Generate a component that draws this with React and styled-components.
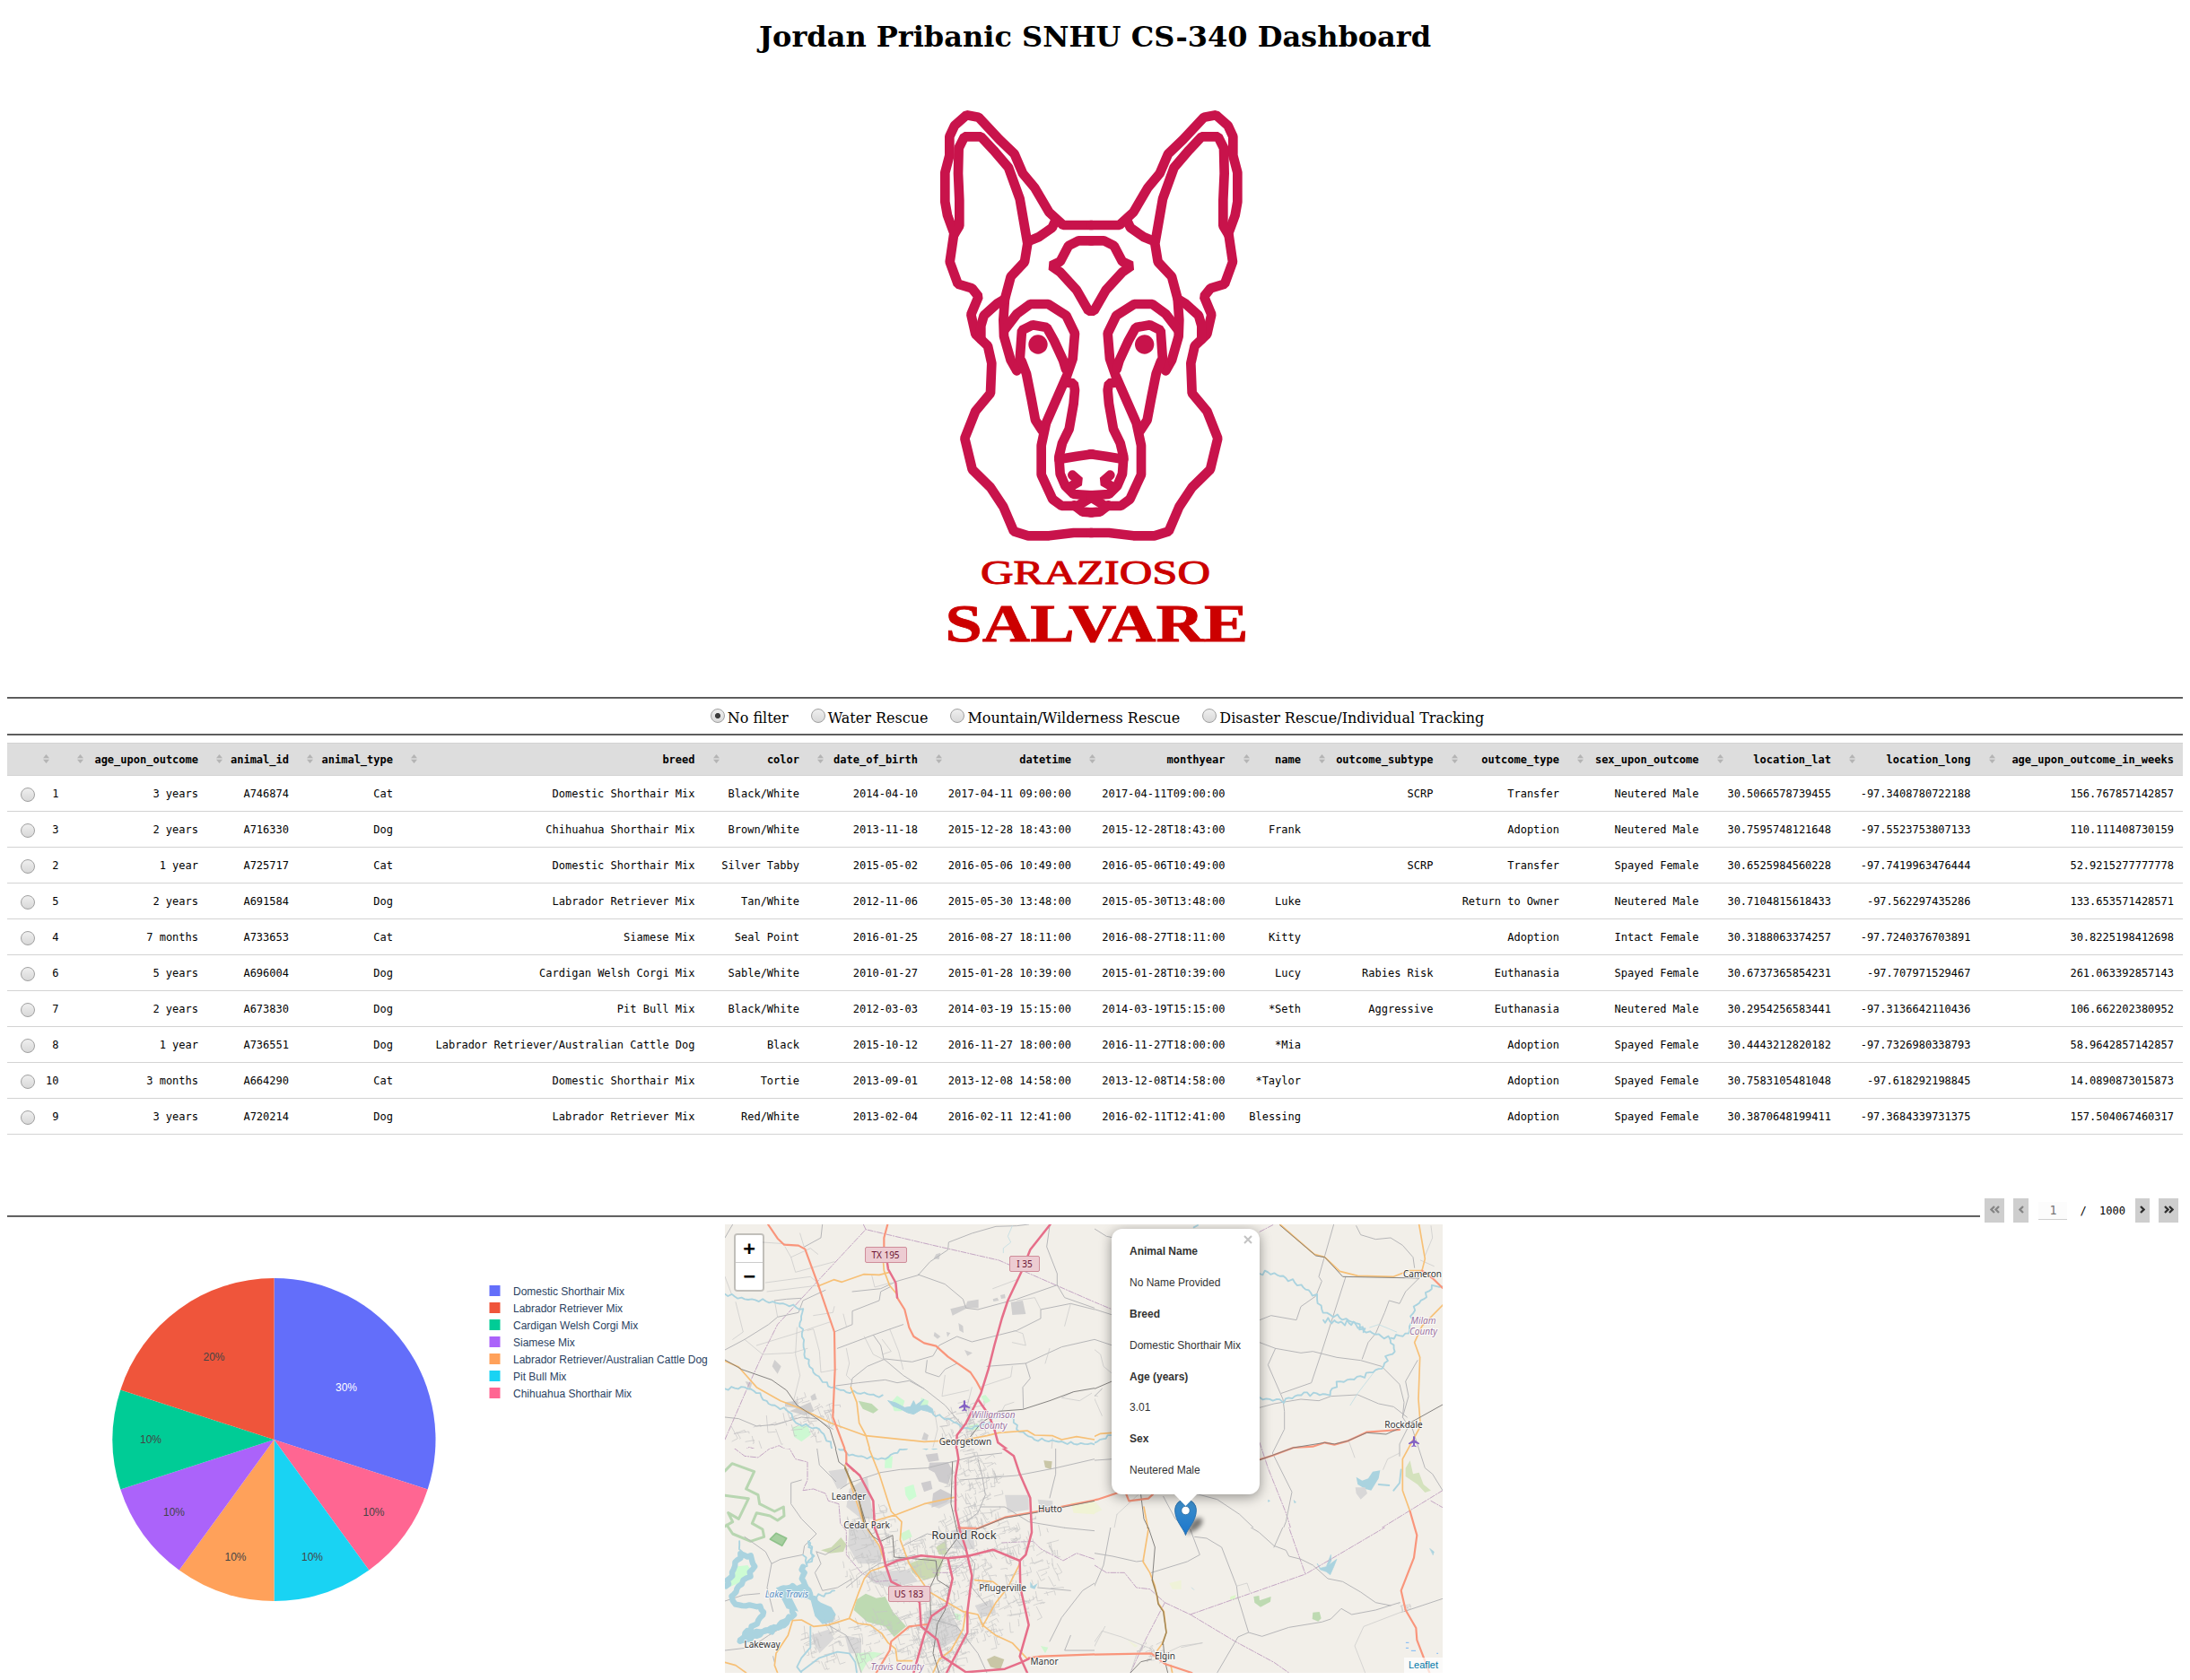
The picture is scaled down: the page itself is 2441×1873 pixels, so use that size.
import React from 'react';
import styled, { createGlobalStyle } from 'styled-components';

const GlobalStyle = createGlobalStyle`
  body { margin: 0; background: #fff; }
  * { box-sizing: border-box; }
`;

const Page = styled.main`
  width: 2441px;
  padding: 0 8px;
  color: #000;
  font-family: 'DejaVu Serif', serif;
  font-size: 16px;
`;

const Title = styled.h1`
  margin: 0;
  height: 90px;
  padding-top: 23px;
  text-align: center;
  font-size: 32px;
  line-height: 37px;
  font-weight: bold;
`;

const Logo = styled.svg`
  display: block;
  width: 441px;
  height: 650px;
  margin: 0 auto 37px;
`;

const Rule = styled.hr`
  margin: 0;
  height: 2px;
  border: 0;
  border-top: 1px solid #555;
  border-bottom: 1px solid #6a6a6a;
`;

const PagerRule = styled(Rule)`
  flex: 1;
  margin: 19px 5px 0 0;
`;

const Filters = styled.div`
  height: 39px;
  display: flex;
  justify-content: center;
  gap: 25px;
  padding: 11px 0 0 5px;
`;

const Option = styled.label`
  display: flex;
  gap: 3px;
  line-height: 21px;
  white-space: nowrap;
`;

const Radio = styled.span`
  flex: none;
  width: 16px;
  height: 16px;
  border: 1px solid #a0a0a0;
  border-radius: 50%;
  background: ${(p) =>
    p.$on
      ? 'radial-gradient(circle, #3c3c3c 0 2.7px, transparent 3.4px), linear-gradient(#efefef, #d8d8d8)'
      : 'linear-gradient(#efefef, #d8d8d8)'};
`;

const Table = styled.table`
  width: 2425px;
  margin-top: 8px;
  table-layout: fixed;
  border-collapse: separate;
  border-spacing: 0;
  font-family: 'DejaVu Sans Mono', monospace;
  font-size: 12px;
`;

const Head = styled.th`
  height: 37px;
  padding: 1px 10px 0;
  border: solid #d3d3d3;
  border-width: 1px 0;
  background: #ddd;
  font-weight: bold;
  white-space: nowrap;
`;

const HeadInner = styled.div`
  display: flex;
  align-items: center;
  justify-content: space-between;
`;

const SortMark = styled.svg`
  display: block;
  width: 7px;
  height: 10px;
  margin: -3px 0 0 0;
  fill: #b4b4b4;
`;

const Cell = styled.td`
  height: 40px;
  padding: ${(p) => (p.$pick ? '2px 0 0 15px' : '0 10px')};
  border-bottom: 1px solid #d3d3d3;
  text-align: right;
  white-space: nowrap;
`;

const Pick = styled(Radio)`
  display: block;
`;

const Pager = styled.div`
  display: flex;
  height: 27px;
  margin: 71px 5px 2px 0;
  font-family: 'DejaVu Sans Mono', monospace;
  font-size: 12px;
  line-height: 28px;
`;

const PageButton = styled.button`
  width: ${(p) => p.$w}px;
  margin: 0 ${(p) => p.$after || 0}px 0 0;
  padding: 0;
  border: 0;
  height: 27px;
  background: #cecece;
  color: ${(p) => (p.disabled ? '#858585' : '#2f2f2f')};
  display: flex;
  align-items: center;
  justify-content: center;
`;

const Chevron = styled.svg`
  height: 9px;
  margin-top: -2px;
  fill: none;
  stroke: currentColor;
  stroke-width: 2.3;
`;

const PageNumber = styled.span`
  width: 32px;
  height: 20px;
  margin: 4px 14px 0 11px;
  border-bottom: 1px solid #cfcfcf;
  background: #fcfcfc;
  color: #777;
  font-size: 13.3px;
  line-height: 19px;
  text-align: center;
`;

const PageTotal = styled.span`
  margin-right: 11px;
  white-space: pre;
`;

const Panels = styled.section`
  display: flex;
  height: 508px;
  padding-bottom: 8px;
`;

const Chart = styled.svg`
  display: block;
  width: 800px;
  height: 500px;
  font-family: 'Liberation Sans', Arial, sans-serif;
  font-size: 12px;
`;

const MapPane = styled.div`
  position: relative;
  width: 800px;
  height: 500px;
  overflow: hidden;
  background: #f2efe9;
  font-family: 'Liberation Sans', Arial, sans-serif;
  font-size: 12px;
`;

const MapDrawing = styled.svg`
  display: block;
  width: 800px;
  height: 500px;
  fill: none;
  stroke-linejoin: round;
  stroke-linecap: round;
`;

const KINDS = {
  motorway: ['#e66e89', 7.5],
  trunk: ['#f9957b', 6.5],
  secondary: ['#f7c076', 5],
  road: ['#b6b6b8', 3],
  street: ['#c6c5c6', 2],
  rail: ['#7d7b78', 2.8],
  railroad: ['#a08758', 4.4],
  river: ['#aad3df', 5.5],
  stream: ['#c0dde3', 2.5],
  lake: ['#aad3df', 19],
  border: ['#c3a5c3', 3],
};

const Way = styled.path`
  stroke: ${(p) => KINDS[p.$kind][0]};
  stroke-width: ${(p) => KINDS[p.$kind][1]};
  stroke-dasharray: ${(p) => (p.$kind === 'border' ? '18 5 4 5' : 'none')};
`;

const Place = styled.text`
  fill: ${(p) => p.$color || '#333'};
  stroke: #fff;
  stroke-width: 2px;
  stroke-opacity: 0.75;
  paint-order: stroke;
  font-family: 'Noto Sans', sans-serif;
  font-size: ${(p) => p.$size || 10}px;
  font-style: ${(p) => (p.$italic ? 'italic' : 'normal')};
  text-anchor: middle;
`;

const Shield = styled.g`
  rect { fill: #edccd2; stroke: #cf8d9a; stroke-width: 1; }
  text { fill: #6c1230; font: 10px 'Noto Sans', sans-serif; text-anchor: middle; }
`;

const ZoomBar = styled.div`
  position: absolute;
  left: 10px;
  top: 10px;
  width: 34px;
  border: 2px solid rgba(0, 0, 0, 0.2);
  border-radius: 4px;
  background-clip: padding-box;
`;

const ZoomButton = styled.button`
  display: block;
  width: 30px;
  height: ${(p) => (p.$first ? 31 : 30)}px;
  padding: 0;
  border: 0;
  border-bottom: ${(p) => (p.$first ? '1px solid #ccc' : '0')};
  border-radius: ${(p) => (p.$first ? '2px 2px 0 0' : '0 0 2px 2px')};
  background: #fff;
  color: #000;
  font: bold 22px/30px 'DejaVu Sans Mono', monospace;
`;

const Popup = styled.div`
  position: absolute;
  left: 431px;
  top: 5px;
  width: 165px;
  height: 296px;
  padding: 17px 20px;
  border-radius: 12px;
  background: #fff;
  box-shadow: 0 3px 14px rgba(0, 0, 0, 0.4);
  color: #333;
`;

const PopupTip = styled.svg`
  position: absolute;
  left: 69px;
  top: 295px;
  width: 27px;
  height: 15px;
`;

const PopupClose = styled.svg`
  position: absolute;
  right: 8px;
  top: 7px;
  width: 10px;
  height: 10px;
  stroke: #c3c3c3;
  stroke-width: 2;
`;

const PopupLine = styled.p`
  margin: 0;
  height: ${(p) => p.$h || 35}px;
  line-height: 17px;
  font-weight: ${(p) => (p.$strong ? 'bold' : 'normal')};
  white-space: nowrap;
`;

const Pin = styled.svg`
  position: absolute;
  left: 501px;
  top: 306px;
  width: 50px;
  height: 41px;
  overflow: visible;
`;

const Credit = styled.a`
  position: absolute;
  right: 0;
  bottom: 0;
  padding: 0 5px;
  background: rgba(255, 255, 255, 0.7);
  color: #0078a8;
  font-size: 11px;
  line-height: 17px;
`;

const COLUMNS = [
  ['', 37.5], ['age_upon_outcome', 155.5], ['animal_id', 101], ['animal_type', 116],
  ['breed', 336.5], ['color', 116.5], ['date_of_birth', 132], ['datetime', 171],
  ['monthyear', 171.5], ['name', 84.5], ['outcome_subtype', 147.5], ['outcome_type', 140.5],
  ['sex_upon_outcome', 155.5], ['location_lat', 147.5], ['location_long', 155.5],
  ['age_upon_outcome_in_weeks', 226.5],
];

const ROWS = [
  ['1', '3 years', 'A746874', 'Cat', 'Domestic Shorthair Mix', 'Black/White', '2014-04-10', '2017-04-11 09:00:00', '2017-04-11T09:00:00', '', 'SCRP', 'Transfer', 'Neutered Male', '30.5066578739455', '-97.3408780722188', '156.767857142857'],
  ['3', '2 years', 'A716330', 'Dog', 'Chihuahua Shorthair Mix', 'Brown/White', '2013-11-18', '2015-12-28 18:43:00', '2015-12-28T18:43:00', 'Frank', '', 'Adoption', 'Neutered Male', '30.7595748121648', '-97.5523753807133', '110.111408730159'],
  ['2', '1 year', 'A725717', 'Cat', 'Domestic Shorthair Mix', 'Silver Tabby', '2015-05-02', '2016-05-06 10:49:00', '2016-05-06T10:49:00', '', 'SCRP', 'Transfer', 'Spayed Female', '30.6525984560228', '-97.7419963476444', '52.9215277777778'],
  ['5', '2 years', 'A691584', 'Dog', 'Labrador Retriever Mix', 'Tan/White', '2012-11-06', '2015-05-30 13:48:00', '2015-05-30T13:48:00', 'Luke', '', 'Return to Owner', 'Neutered Male', '30.7104815618433', '-97.562297435286', '133.653571428571'],
  ['4', '7 months', 'A733653', 'Cat', 'Siamese Mix', 'Seal Point', '2016-01-25', '2016-08-27 18:11:00', '2016-08-27T18:11:00', 'Kitty', '', 'Adoption', 'Intact Female', '30.3188063374257', '-97.7240376703891', '30.8225198412698'],
  ['6', '5 years', 'A696004', 'Dog', 'Cardigan Welsh Corgi Mix', 'Sable/White', '2010-01-27', '2015-01-28 10:39:00', '2015-01-28T10:39:00', 'Lucy', 'Rabies Risk', 'Euthanasia', 'Spayed Female', '30.6737365854231', '-97.707971529467', '261.063392857143'],
  ['7', '2 years', 'A673830', 'Dog', 'Pit Bull Mix', 'Black/White', '2012-03-03', '2014-03-19 15:15:00', '2014-03-19T15:15:00', '*Seth', 'Aggressive', 'Euthanasia', 'Neutered Male', '30.2954256583441', '-97.3136642110436', '106.662202380952'],
  ['8', '1 year', 'A736551', 'Dog', 'Labrador Retriever/Australian Cattle Dog', 'Black', '2015-10-12', '2016-11-27 18:00:00', '2016-11-27T18:00:00', '*Mia', '', 'Adoption', 'Spayed Female', '30.4443212820182', '-97.7326980338793', '58.9642857142857'],
  ['10', '3 months', 'A664290', 'Cat', 'Domestic Shorthair Mix', 'Tortie', '2013-09-01', '2013-12-08 14:58:00', '2013-12-08T14:58:00', '*Taylor', '', 'Adoption', 'Spayed Female', '30.7583105481048', '-97.618292198845', '14.0890873015873'],
  ['9', '3 years', 'A720214', 'Dog', 'Labrador Retriever Mix', 'Red/White', '2013-02-04', '2016-02-11 12:41:00', '2016-02-11T12:41:00', 'Blessing', '', 'Adoption', 'Spayed Female', '30.3870648199411', '-97.3684339731375', '157.504067460317'],
];

const SLICES = [
  [0, 0.3, '#636efa', '30%', 378, 186, '#fff'],
  [0.3, 0.4, '#ff6692', '10%', 408.5, 325, '#444'],
  [0.4, 0.5, '#19d3f3', '10%', 340, 375, '#444'],
  [0.5, 0.6, '#ffa15a', '10%', 254.5, 375, '#444'],
  [0.6, 0.7, '#ab63fa', '10%', 186, 325, '#444'],
  [0.7, 0.8, '#00cc96', '10%', 160, 244, '#444'],
  [0.8, 1, '#ef553b', '20%', 230.5, 152, '#444'],
];

const LEGEND = [
  ['Domestic Shorthair Mix', '#636efa'],
  ['Labrador Retriever Mix', '#ef553b'],
  ['Cardigan Welsh Corgi Mix', '#00cc96'],
  ['Siamese Mix', '#ab63fa'],
  ['Labrador Retriever/Australian Cattle Dog', '#ffa15a'],
  ['Pit Bull Mix', '#19d3f3'],
  ['Chihuahua Shorthair Mix', '#ff6692'],
];

const slicePath = (a, b) => {
  const at = (t) => [297.5 + 180 * Math.sin(t * 2 * Math.PI), 240 - 180 * Math.cos(t * 2 * Math.PI)];
  const [x1, y1] = at(a);
  const [x2, y2] = at(b);
  return `M297.5 240 L${x1} ${y1} A180 180 0 0 1 ${x2} ${y2}Z`;
};

function FaceHalf() {
  return (
    <g>
      <path d="M652 483H555L508 440L460 358L420 310L392 245L342 197L272 122L232 115L192 150L175 187V250L160 307V405L168 450L190 510L176 606L203 680L250 694L272 722L247 782L262 848L303 887L316 945L312 1045L262 1105L226 1196L251 1300L312 1360L355 1425L390 1507L438 1522H508L590 1512H652" />
      <path d="M190 515L208 485V400L204 310L206 225L225 187H280L322 232L372 290L410 395L436 545L426 606L380 655L360 730L355 800L357 855L380 935L400 970" />
      <path d="M436 538L475 522L518 492L528 470" />
      <path d="M360 730L335 745L290 785L280 820V865" />
      <path d="M358 835L400 780L445 747H505L565 785L594 845L587 930L568 985L498 1145L482 1220V1318L520 1400L550 1422H603L652 1392" />
      <path d="M400 968L410 935L417 835L453 817L500 825L525 870L555 935L564 965" />
      <path d="M416 938L432 980L448 1060L462 1135L485 1170" />
      <path d="M570 1010L590 1012L594 1035L590 1080L575 1165L552 1212L541 1258L545 1315L562 1355L590 1383L652 1387" />
      <path d="M541 1266L600 1256L652 1249" />
      <path d="M586 1319L610 1340L575 1360" />
      <path d="M592 1420L620 1442L652 1444" />
      <path d="M652 535H607L573 552L545 605L515 619L545 640L600 700L640 770H652" />
      <circle cx="471" cy="882" r="32" fill="#c8134b" stroke="none" />
    </g>
  );
}

function GraziosoLogo() {
  return (
    <Logo viewBox="0 0 441 650">
      <g transform="scale(.33333)" fill="none" stroke="#c8134b" strokeWidth="32" strokeLinejoin="bevel" strokeLinecap="round">
        <FaceHalf />
        <g transform="translate(1298 0) scale(-1 1)"><FaceHalf /></g>
      </g>
      <g fill="#c00" stroke="#c00" fontFamily="'Liberation Serif', serif">
        <text x="93" y="560.5" fontSize="38.5" strokeWidth="1" textLength="256" lengthAdjust="spacingAndGlyphs">GRAZIOSO</text>
        <text x="53.5" y="624.5" fontSize="60" fontWeight="bold" strokeWidth=".8" textLength="338" lengthAdjust="spacingAndGlyphs">SALVARE</text>
      </g>
    </Logo>
  );
}

/* Breaks a straight run of points into a meandering line. */
const meander = (points, amp = 6, step = 11) => {
  const p = points.split(' ').map((s) => s.split(',').map(Number));
  let d = `M${p[0]}`;
  let n = 0;
  for (let i = 1; i < p.length; i += 1) {
    const [ax, ay] = p[i - 1];
    const [bx, by] = p[i];
    const len = Math.hypot(bx - ax, by - ay) || 1;
    const parts = Math.max(1, Math.round(len / step));
    for (let k = 1; k <= parts; k += 1) {
      n += 1;
      const off = amp * Math.sin(n * 2.1) * (0.6 + 0.4 * Math.sin(n * 0.7));
      const t = k / parts;
      d += `L${(ax + (bx - ax) * t - ((by - ay) / len) * off).toFixed(1)},${(ay + (by - ay) * t + ((bx - ax) / len) * off).toFixed(1)}`;
    }
  }
  return d;
};

/* Short connected streets scattered through a built-up area. */
const streets = (cx, cy, rx, ry, count, seed, size = 30) => {
  let s = seed;
  const rnd = () => {
    s = (s * 16807) % 2147483647;
    return s / 2147483647;
  };
  let d = '';
  for (let i = 0; i < count; i += 1) {
    const a = rnd() * Math.PI * 2;
    const r = Math.sqrt(rnd());
    const x = cx + Math.cos(a) * r * rx;
    const y = cy + Math.sin(a) * r * ry;
    const t = -0.3 + (rnd() > 0.5 ? Math.PI / 2 : 0) + (rnd() - 0.5) * 0.5;
    const l = size * (0.4 + rnd());
    const m = l * (rnd() - 0.5);
    d += `M${x.toFixed(0)},${y.toFixed(0)}l${(Math.cos(t) * l).toFixed(0)},${(Math.sin(t) * l).toFixed(0)}l${(-Math.sin(t) * m).toFixed(0)},${(Math.cos(t) * m).toFixed(0)}`;
  }
  return d;
};

const NORTHWEST = [
  ['border', 'M24,735L100,560L150,450L200,350L320,220L495,32L720,85L940,135L1260,275M495,32L487,15'],
  ['border', 'M24,795L60,790L105,760L150,775L205,755L250,780'],
  ['road', 'M24,435L90,400L170,350L200,325L270,310L285,270L360,235M190,270L230,265L280,262M350,15L345,60L290,90M24,60L50,15M24,660L70,665L130,690L190,685L280,660L330,665L385,700M670,185L600,205L545,230L450,240M670,185L710,140L770,100L772,75L850,45L930,22L1000,20L1040,15M670,183L760,215L820,265L830,295L870,300L1000,265L1135,218M1110,20L1100,90L1135,180L1135,218L1160,260L1260,295'],
  ['road', 'M395,555L470,545L560,535L600,545L640,538L690,565L760,620L820,690M445,560L450,530L500,490L560,465L650,475L720,455L740,420L800,390L850,408L940,385L1000,370L1080,330L1080,300L1180,280L1260,300M520,385L545,420L555,465L620,520L690,565M700,470L695,510L740,525L760,500L800,480M900,490L1030,480L1150,425L1260,400M1030,480L1045,530L1020,560L1022,630M400,430L520,385L620,350M390,375L450,350L450,305L540,270L545,240L575,225'],
  ['street', 'M225,90L245,125L310,95L335,115M245,125L260,175L390,140M275,45L290,95M60,275L85,375L50,400M90,400L150,450L250,445L300,430M265,360L260,450L275,520L250,620M300,370L320,365L340,440L345,510L400,500M130,420L260,380L380,340M160,210L310,190L340,215M165,240L330,220M24,190L45,245M190,270L200,325M490,390L520,450L560,470M575,365L605,440L620,500M550,400L580,440L550,450M420,315L430,355M390,290L385,310L320,320M430,430L440,480L430,520L450,540M150,75L225,80M515,185L525,225L580,210M1000,200L920,230M1080,300L1060,260L1000,270M1180,280L1160,355M1110,430L1095,480M985,410L1030,420L1020,380L990,370M760,520L750,590L840,570M850,560L830,640L850,680M875,560L980,525L985,490M990,610L960,620L950,640M725,640L735,700L720,760M1120,730L1115,780M1190,575L1150,595L1210,605L1250,580'],
  ['stream', 'M985,20L970,55L980,75L955,95L955,110'],
  ['river', meander('24,248 90,265 150,270 240,285 285,300 275,345 285,390 290,450 320,510 370,555 430,575 490,580 550,592', 6)],
  ['river', meander('24,565 90,560 130,575 170,615 240,640 260,680 340,700 380,755 390,780', 6)],
  ['river', meander('720,650 780,670 830,700 870,690 900,680 950,650 990,665 1000,700 1060,735 1130,740 1180,748 1260,750', 6)],
  ['secondary', 'M335,222L388,200L415,208L488,182L540,184L575,175M554,145L556,170L575,220L600,250M24,472L70,492L130,560L210,605L275,630L380,680L495,722L690,742L830,735L900,722L940,712L1035,705L1060,720L1120,722L1150,735L1200,725L1260,735M445,560L465,610L473,680L495,720L512,780'],
  ['rail', 'M24,468L80,500L180,535L230,570L265,620L340,670L375,700L400,780M845,725L880,680L940,640L1020,634L1110,605L1190,575L1260,563'],
  ['trunk', 'M568,15L556,60L556,100M600,260L625,300L640,360L655,390L690,412L730,422L770,458L845,510L865,540L880,568M168,15L200,62L222,83L270,86L292,98L335,215L390,375L392,500L385,660L430,780'],
  ['motorway', 'M1112,15L1045,100L1015,175L970,270L950,330L925,420L905,500L880,580L870,600L830,680L800,720L797,785M870,600L905,650L925,700L937,745L985,780M567,145L570,165L595,210L600,260'],
];

const NORTHEAST = [
  ['border', 'M0,250L60,275L120,300M612,40L660,15M612,745L640,830L700,980L740,1110M1224,905L890,1110M1185,940L1224,962'],
  ['road', 'M0,15L60,30L100,55L125,60M0,280L120,318M0,410L60,400L120,420M0,605L60,590L85,565M0,830L50,805L120,800M612,410L665,430L750,445L790,440L870,460L950,470L1020,490L1080,550L1095,610L1090,660M665,430L640,485L690,600L695,640L695,700L655,780L720,910L700,1010L665,1095M612,335L650,320L735,335L750,290L800,255L820,205L810,190L860,15M900,190L820,440L785,545L685,580M612,628L660,615L750,600L810,605L850,590L940,585L1010,615L1060,625L1105,660M935,20L950,50L1000,65L1050,60L1090,85L1125,125L1130,160M1150,190L1100,240L1080,280L1045,270L1030,310L1000,380L975,410L955,465M1140,470L1100,540L1110,590L1090,660L1110,690L1080,750L1080,790M1120,690L1165,830L1190,850L1224,905M395,915L470,935L545,985L660,1095M290,925L330,1000L380,1040L400,1110'],
  ['street', 'M45,565L85,655M30,410L80,450L90,490L120,515M135,985L110,1110M135,985L205,920M0,815L40,920L20,1110M910,740L930,795M1080,780L1040,800L1025,835M1185,20L1190,60L1165,120M1150,135L1195,155M50,560L40,580L70,590'],
  ['stream', 'M990,515L940,580L915,620M980,360L1010,350L1070,375'],
  ['river', meander('612,180 640,175 690,190 750,220 800,255 825,310 860,320 920,340 960,370 1010,385 1050,400 1065,440 1035,460 1030,490 950,525 870,545 845,585 760,580 690,605 612,597', 8)],
  ['river', meander('825,335 890,345 940,345 960,375', 11, 7)],
  ['river', meander('1050,395 1110,380 1130,290 1160,265 1190,220 1224,225', 7)],
  ['river', meander('0,750 50,750 115,720', 5)],
  ['river', 'M392,25L405,18M1085,835L1080,880L1060,905M1010,885L1045,888'],
  ['secondary', 'M0,725L35,735L80,715L120,712M1145,15L1165,130L1155,170L1110,170L1060,190L940,187L880,172L830,125L795,115L680,15M1224,285L1155,355L1130,410L1148,460L1143,600L1150,690L1090,800L1090,905L1115,975M225,960L240,1040L230,1110'],
  ['rail', 'M680,18L800,120L830,125L890,190L1145,195M1095,690L1224,618M0,574L60,565L118,540M215,920L225,1000L262,1075L262,1110'],
  ['trunk', 'M612,802L655,788L725,762L790,758L830,745L862,752L905,740L970,710L1080,702M1155,170L1190,195L1224,228M1115,975L1138,1055L1130,1110M165,915L175,940L240,932L255,918M0,950L70,935L140,912'],
  ['rail', 'M612,803L725,762L830,745L862,750L905,740L970,712L1035,717L1095,690'],
];

const SOUTHWEST = [
  ['border', 'M24,5L50,10L90,40L135,45L180,10L240,15L260,50L300,60L300,120L285,155L320,150L360,165L370,190L405,200L410,265L430,290L430,370L480,430L530,460L600,455'],
  ['border', 'M950,330L1055,325L1080,350L1155,390L1200,365L1260,385M720,430L780,430L820,400L850,370'],
  ['street', streets(500, 330, 90, 150, 100, 31)],
  ['street', streets(660, 420, 150, 120, 100, 77)],
  ['street', streets(850, 330, 140, 130, 130, 13)],
  ['street', streets(880, 530, 150, 130, 110, 57)],
  ['street', streets(740, 640, 90, 130, 170, 91, 26)],
  ['street', streets(560, 640, 130, 100, 80, 39)],
  ['street', streets(1040, 400, 100, 150, 60, 22)],
  ['street', streets(850, 120, 90, 110, 70, 63)],
  ['street', streets(340, 660, 70, 80, 45, 83)],
  ['road', 'M24,525L85,505L140,500M280,120L245,130L245,200L280,250L330,300L290,340L285,370L210,385L180,400L160,360L90,310M330,0L340,70L395,125M545,95L610,85L700,80L800,55L860,40L950,30M410,150L440,130L545,95M24,690L110,680L170,640L220,610M185,710L190,730M1260,465L1220,490L1150,580L1110,660M1070,480L1180,490M870,50L885,110L895,170L870,230L830,260M810,120L1000,105L1130,80L1260,50M1130,0L1130,100L1110,180M880,210L960,210L1040,260L1160,280M1260,290L1160,280M1180,640L1160,690L1260,690M430,480L490,430L540,400L660,370M620,340L700,300L800,320L860,400L850,480L900,540M700,580L800,610L870,700L900,765M360,600L430,640L460,700L480,765M180,400L165,480L185,560'],
  ['road', 'M330,360L360,370L410,340M330,360L345,400L325,430L350,490L400,480L450,450'],
  ['river', meander('400,10 440,35 500,45 560,50 590,30 640,10 720,15 780,0', 5)],
  ['lake', meander('28,475 50,430 60,395 80,370 110,375 122,410 105,440 70,475 45,520 70,540 130,540 155,560 130,600 100,625 75,660 120,645 170,620 220,605 255,570 235,520 210,485 240,480 280,480', 6)],
  ['lake', meander('75,655 130,630 190,620 240,580', 9)],
  ['lake', meander('285,410 285,460 315,510 350,580 380,570', 6)],
  ['river', meander('305,325 320,375 295,400 290,370M320,500 360,505 390,490'.split('M')[0], 6)],
  ['river', meander('290,410 318,385 310,350 305,325', 6, 7)],
  ['river', meander('320,510 355,505 390,490', 7, 8)],
  ['river', meander('85,375 75,350 70,325', 4)],
  ['river', 'M310,610L310,680L280,715L265,745L280,765M280,760L340,715L400,695L440,700L460,730L465,765'],
  ['secondary', 'M500,0L540,100L580,225L615,260L610,320L640,400L690,470L700,490L820,560L870,570L885,605L930,640L985,665L1035,718M520,258L600,235L690,200L790,178M425,70L450,150L490,270L540,340L560,400M560,408L510,425L490,450L470,500L440,583L370,605L320,610L280,588L250,590L235,640L195,700L190,740L200,765M440,583L470,600L510,605L550,635L570,665L595,685L600,725L650,725M1010,400L970,480L930,530L885,610M860,455L920,460L940,475M830,560L820,620L780,690L740,720L720,765M24,730L60,740L95,765'],
  ['rail', 'M390,0L405,60L425,75L470,180L500,280L520,310L545,325L585,305L590,378L640,382L730,390L735,455L775,480L760,555L735,600L720,700L740,765M785,60L780,200L805,310L760,370L710,480L712,580L690,640'],
  ['railroad', 'M425,80L470,180L490,265'],
  ['trunk', 'M415,0L430,30L430,65L455,90M805,280L870,282L960,245L1070,225L1260,188M530,765L575,690L580,660L640,610L700,603M1040,715L1080,710L1260,703'],
  ['rail', 'M865,285L960,247L1070,228L1260,190'],
  ['motorway', 'M430,65L475,105L520,190L525,280L550,345L560,400L580,460L640,490L675,530L680,610L735,655L750,710L830,763L960,752L1015,730L1040,718M797,0L805,50L795,110L795,220L810,290L830,350L850,440L835,560L835,630L765,765M560,408L600,390L680,373L770,382L835,375L920,353L1010,390M770,385L785,450L765,540L715,575L690,640L655,765M935,0L990,40L1010,100L1045,180L1050,295L1030,370L1010,390L1012,480L1040,605L1010,710L1035,765'],
];

const SOUTHEAST = [
  ['border', 'M0,210L60,240L100,265L160,265L200,315L245,320L295,365L380,405L530,495L660,565L710,600M295,365L230,490L180,600M380,405L765,270L1224,0M670,0L705,100L765,270M1185,25L1224,45'],
  ['road', 'M0,165L60,200L120,210L200,228L225,225M55,320L90,240L120,80L160,30L200,5M55,320L20,325L0,360M250,265L370,228L412,205L380,120L330,80M290,5L300,40L325,80M395,145L435,150L485,180L535,310L540,350L575,465L540,480L470,600M575,465L620,478L710,448L820,430L850,420L885,385L920,405L1000,390L1080,365M400,15L470,20L515,55L545,70L560,100L610,130L660,175L700,190L710,210L750,220L790,240L840,285L890,295L950,330L1000,365L1050,375M720,0L700,90L660,180M1095,395L1224,352'],
  ['street', 'M1090,395L960,445L930,510L965,600M45,5L25,205M0,505L40,525L85,460L150,480L250,520M50,530L95,445M535,310L570,300L580,330M285,540L350,510L420,500M130,60L150,80L180,75L190,40M225,500L200,540L180,600M420,500L350,515'],
  ['street', streets(1090, 380, 20, 20, 8, 12, 15)],
  ['street', streets(240, 530, 40, 35, 22, 44, 17)],
  ['secondary', 'M225,0L215,40L240,120L222,228L245,265L262,310L272,365L292,395L300,465L285,505L270,525M315,575L320,600M1090,0L1115,60'],
  ['railroad', 'M213,0L220,50L238,115M253,290L270,345L273,370L290,395L300,465L287,505'],
  ['rail', 'M222,60L262,180L253,290M290,505L295,560L305,600M0,582L40,600M250,555L215,563L180,600'],
  ['trunk', 'M0,540L250,535L295,570L385,600M1115,60L1138,140L1128,215L1085,325L1100,390L1135,450L1138,490L1180,600M165,0L180,30L205,27L250,5M0,35L130,5'],
];

function Plane({ x, y }) {
  return (
    <path
      transform={`translate(${x} ${y})`}
      fill="#8461c4"
      d="M0-6C1-6 1-4.6 1-3.8V-1.4L6 2V3.2L1 1.8V4.2L2.7 5.5V6.2L0 5.5L-2.7 6.2V5.5L-1 4.2V1.8L-6 3.2V2L-1-1.4V-3.8C-1-4.6-1-6 0-6Z"
    />
  );
}

function Sector({ at, ways, children }) {
  return (
    <g transform={`translate(${at}) scale(.33333)`}>
      {children}
      {ways.map(([kind, d], i) => <Way key={i} $kind={kind} d={d} />)}
    </g>
  );
}

function AnimalMap() {
  return (
    <MapPane>
      <MapDrawing viewBox="0 0 800 500">
        <defs>
          <clipPath id="nw"><path d="M0 0H412V250H0Z" /></clipPath>
          <clipPath id="ne"><path d="M412 0H800V338H412Z" /></clipPath>
          <clipPath id="sw"><path d="M0 250H412V500H0Z" /></clipPath>
          <clipPath id="se"><path d="M412 338H800V500H412Z" /></clipPath>
        </defs>
        <g clipPath="url(#nw)">
          <Sector at="-8 -5" ways={NORTHWEST}>
            <g fill="#d0cfcf">
              <path d="M778,298L830,285L835,272L872,266L872,295L835,295L785,320ZM980,275L1020,270L1030,315L985,318ZM730,115L745,110L740,132L722,130ZM805,345L820,355L822,378L808,370ZM825,435L852,445L835,455ZM725,375L745,390L735,398L722,388ZM765,375L778,378L768,392ZM190,468L212,490L200,515L182,490ZM92,540L115,545L108,570ZM240,640L310,610L322,640L290,655L260,645ZM310,590L325,580L332,600L315,605ZM690,710L705,720L700,738L682,735ZM225,610L265,605L270,630L225,625ZM905,765L950,765L940,780L910,780ZM920,265L935,260L940,270L922,273ZM945,252L960,248L962,262L948,264Z" />
            </g>
            <path fill="#cdf8d2" d="M250,692L300,688L312,718L280,742L255,725ZM580,610L600,588L625,605L615,640L590,640ZM880,590L895,585L912,605L895,615ZM680,595L705,605L700,635L678,625ZM835,690L870,680L875,700L840,705Z" />
            <path fill="#bedab2" d="M470,605L515,615L537,635L520,647L485,632Z" />
            <path fill="#aad3df" stroke="#aad3df" strokeWidth="3" d="M570,605L595,612L625,628L645,625L655,605L662,620L690,600L675,622L700,620L718,632L722,648L700,640L680,635L655,650L635,645L610,632L585,622Z" />
            <path stroke="#c4c3c4" strokeWidth="2" d={streets(820, 680, 80, 70, 75, 17, 26)} />
            <path stroke="#c4c3c4" strokeWidth="2" d={streets(310, 650, 100, 70, 40, 71, 28)} />
            <path stroke="#c4c3c4" strokeWidth="2" d={streets(120, 700, 80, 60, 12, 75, 40)} />
          </Sector>
        </g>
        <g clipPath="url(#ne)">
          <Sector at="392 -5" ways={NORTHEAST}>
            <path fill="#aad3df" d="M935,860L955,872L975,865L990,842L1015,838L1010,865L985,905L965,900L940,885Z" />
            <path fill="#d8d7d7" d="M932,895L965,895L972,915L950,935L935,915Z" />
            <path fill="#d4e2bd" d="M1100,830L1115,805L1125,850L1145,845L1160,885L1185,905L1165,912L1140,885L1100,858Z" />
            <path fill="#eff2d8" d="M0,950L65,945L85,970L45,990L0,985Z" />
            <path fill="#aad3df" d="M40,885L52,880L45,895ZM640,935L648,940L640,945ZM725,935L735,945L728,948ZM553,1030L566,1035L556,1040ZM270,1045L282,1050L275,1055ZM1150,1095L1168,1110L1155,1110Z" />
          </Sector>
        </g>
        <g clipPath="url(#sw)">
          <Sector at="-8 245" ways={SOUTHWEST}>
            <g fill="#d9d8d8">
              <path d="M440,280L490,265L520,320L550,350L545,400L470,400L435,340ZM490,430L640,420L670,460L580,480L520,465ZM700,200L760,180L790,190L740,215ZM780,290L850,270L860,350L790,350ZM960,170L1040,170L1040,220L970,230ZM370,90L440,80L430,140L400,150ZM440,150L500,110L520,250L480,250L430,210ZM1070,185L1120,190L1120,220L1080,225ZM860,540L920,520L930,565L880,580ZM690,560L770,545L820,640L740,690L690,630ZM425,640L480,650L480,700L440,700ZM310,640L370,620L390,650L340,700Z" />
            </g>
            <path fill="#ceccce" d="M708,62L770,60L785,90L770,135L740,125L725,95L705,85ZM680,130L712,122L718,150L690,160ZM720,165L745,150L785,170L765,195L715,212ZM695,35L735,30L740,55L705,60Z" />
            <path fill="#cdfcd3" d="M560,45L585,40L582,80L558,80ZM625,145L655,135L665,175L640,190L628,170ZM24,460L55,410L100,405L115,425L80,460L24,485Z" />
            <path fill="#bedab2" d="M465,520L495,500L530,515L560,510L585,560L630,610L590,645L560,610L500,595L455,555Z" />
            <path fill="#cbd9b2" d="M640,400L690,380L755,385L740,440L690,455L650,430ZM345,355L380,345L412,312L430,335L420,360L375,365ZM730,345L765,320L765,370L740,370Z" />
            <path fill="#c9c6a6" d="M900,720L925,708L958,720L945,755L912,745ZM1090,55L1118,58L1115,85L1095,78Z" />
            <path fill="#f0f3d5" d="M1180,195L1260,190L1260,235L1190,230Z" />
            <path fill="#d0f6cf" d="M460,700L520,695L550,700L500,730L480,765L460,720ZM790,565L815,570L810,590L795,585ZM1080,675L1105,680L1095,700ZM610,300L640,285L650,310L620,325Z" />
            <path stroke="#a9cfa2" strokeWidth="9" d="M24,90L48,65L122,92L95,150L135,170L140,200L190,225L220,210L222,240L200,255L175,240L130,230L115,265L150,285L155,310L110,325L50,300L30,270M24,172L103,182L70,250L35,230L50,260L24,275" strokeOpacity=".8" />
            <path fill="#a6cf9f" stroke="#8fc28b" strokeWidth="5" d="M175,318L195,298L230,315L215,340Z" />
            <path fill="#aad3df" d="M305,500L345,530L380,545L395,570L385,595L350,602L325,575ZM195,480L240,470L300,480L320,520L280,515L240,500L270,560L230,550ZM1045,460L1055,475L1070,465L1060,485L1045,480Z" />
          </Sector>
        </g>
        <g clipPath="url(#se)">
          <Sector at="392 300" ways={SOUTHEAST}>
            <path fill="#bedab2" d="M790,398L812,396L818,418L808,428L788,420ZM592,345L610,342L612,358L650,345L648,362L615,380L595,365Z" />
            <path fill="#dcf8c9" d="M515,345L532,340L530,355L512,355Z" />
            <path fill="#eff2d8" d="M0,35L65,45L50,70L0,60ZM310,300L350,290L350,320L320,320ZM170,490L205,510L195,515Z" />
            <path fill="#aad3df" stroke="#aad3df" strokeWidth="2" d="M805,235L815,250L835,245L850,205L852,225L842,240L870,220L860,245L848,272L835,262L815,255ZM1182,185L1195,195L1192,205ZM30,200L38,208L32,208ZM385,315L392,322" />
            <path stroke="#3f9cff" strokeWidth="2" d="M1102,499H1110M1102,517H1109M1120,526H1133M1205,535H1208" />
          </Sector>
        </g>
        <Plane x={267} y={202} />
        <Plane x={768} y={242} />
        <Place x="299" y="216" $italic $color="#9d75a2">Williamson</Place>
        <Place x="299" y="228" $italic $color="#9d75a2">County</Place>
        <Place x="268" y="245.5">Georgetown</Place>
        <Place x="138" y="306.5">Leander</Place>
        <Place x="158" y="339">Cedar Park</Place>
        <Place x="266.5" y="351" $size="13">Round Rock</Place>
        <Place x="362.5" y="321">Hutto</Place>
        <Place x="309.5" y="409">Pflugerville</Place>
        <Place x="69" y="415.5" $italic $color="#5b8fc2">Lake Travis</Place>
        <Place x="41.5" y="472">Lakeway</Place>
        <Place x="192" y="497" $italic $color="#9d75a2">Travis County</Place>
        <Place x="356" y="490.5">Manor</Place>
        <Place x="490.5" y="485">Elgin</Place>
        <Place x="777.5" y="59">Cameron</Place>
        <Place x="756.5" y="227">Rockdale</Place>
        <Place x="778.5" y="111" $italic $color="#9d75a2">Milam</Place>
        <Place x="778.5" y="123" $italic $color="#9d75a2">County</Place>
        <Shield><rect x="156.5" y="25.5" width="46" height="17" rx="1.5" /><text x="179" y="38">TX 195</text></Shield>
        <Shield><rect x="317.5" y="35.5" width="33" height="17" rx="1.5" /><text x="334" y="48">I 35</text></Shield>
        <Shield><rect x="182.5" y="403.5" width="46" height="17" rx="1.5" /><text x="205" y="416">US 183</text></Shield>
      </MapDrawing>
      <ZoomBar>
        <ZoomButton $first>+</ZoomButton>
        <ZoomButton>−</ZoomButton>
      </ZoomBar>
      <Pin viewBox="0 0 50 41">
        <defs>
          <linearGradient id="pin" x2="0" y2="1"><stop stopColor="#3f8fc9" /><stop offset="1" stopColor="#1a76cd" /></linearGradient>
          <filter id="soft" x="-50%" y="-50%" width="200%" height="200%"><feGaussianBlur stdDeviation="2.5" /></filter>
        </defs>
        <path d="M13 40L18 27Q24 19 31 22Q33 28 25 34Z" fill="#000" opacity=".5" filter="url(#soft)" />
        <path d="M12.5 40.5C11 34 .6 25 .6 12.5A11.9 11.9 0 0 1 24.4 12.5C24.4 25 14 34 12.5 40.5Z" fill="url(#pin)" stroke="#2d72ad" />
        <circle cx="12.5" cy="13" r="4.7" fill="#fff" stroke="#316f9f" strokeWidth=".8" />
      </Pin>
      <Popup>
        <PopupLine $strong>Animal Name</PopupLine>
        <PopupLine>No Name Provided</PopupLine>
        <PopupLine $strong>Breed</PopupLine>
        <PopupLine>Domestic Shorthair Mix</PopupLine>
        <PopupLine $strong $h={34}>Age (years)</PopupLine>
        <PopupLine>3.01</PopupLine>
        <PopupLine $strong>Sex</PopupLine>
        <PopupLine>Neutered Male</PopupLine>
        <PopupTip viewBox="0 0 27 15"><path d="M0 0H27L13.5 14Z" fill="#fff" /></PopupTip>
        <PopupClose viewBox="0 0 10 10"><path d="M1 1L9 9M9 1L1 9" /></PopupClose>
      </Popup>
      <Credit>Leaflet</Credit>
    </MapPane>
  );
}

function BreedChart() {
  return (
    <Chart viewBox="0 0 800 500">
      {SLICES.map(([a, b, color]) => <path key={color} d={slicePath(a, b)} fill={color} />)}
      {SLICES.map(([, , color, label, x, y, ink]) => (
        <text key={color} x={x} y={y} fill={ink} textAnchor="middle">{label}</text>
      ))}
      {LEGEND.map(([name, color], i) => (
        <g key={name}>
          <rect x="537.5" y={68 + i * 19} width="12" height="12" fill={color} />
          <text x="564" y={79 + i * 19} fill="#2a3f5f">{name}</text>
        </g>
      ))}
    </Chart>
  );
}

function Arrow({ double, back }) {
  const w = double ? 11 : 6;
  return (
    <Chevron width={w} viewBox={`0 0 ${w} 9`}>
      <g transform={back ? `translate(${w} 0) scale(-1 1)` : undefined}>
        <path d="M1 1L4.5 4.5L1 8" />
        {double && <path d="M6 1L9.5 4.5L6 8" />}
      </g>
    </Chevron>
  );
}

export default function App() {
  const filters = ['No filter', 'Water Rescue', 'Mountain/Wilderness Rescue', 'Disaster Rescue/Individual Tracking'];
  return (
    <Page>
      <GlobalStyle />
      <Title>Jordan Pribanic SNHU CS-340 Dashboard</Title>
      <GraziosoLogo />
      <Rule />
      <Filters>
        {filters.map((name, i) => (
          <Option key={name}><Radio $on={i === 0} />{name}</Option>
        ))}
      </Filters>
      <Rule />
      <Table>
        <colgroup>
          <col width="30" />
          {COLUMNS.map(([name, w]) => <col key={name} style={{ width: w }} />)}
        </colgroup>
        <thead>
          <tr>
            <Head />
            {COLUMNS.map(([name]) => (
              <Head key={name}>
                <HeadInner>
                  <SortMark viewBox="0 0 7 10"><path d="M0 4.2L3.5 0L7 4.2ZM0 5.8H7L3.5 10Z" /></SortMark>
                  {name}
                </HeadInner>
              </Head>
            ))}
          </tr>
        </thead>
        <tbody>
          {ROWS.map((row) => (
            <tr key={row[0]}>
              <Cell $pick><Pick /></Cell>
              {row.map((value, i) => <Cell key={COLUMNS[i][0]}>{value}</Cell>)}
            </tr>
          ))}
        </tbody>
      </Table>
      <Pager>
        <PagerRule />
        <PageButton disabled $w={22} $after={10}><Arrow double back /></PageButton>
        <PageButton disabled $w={17}><Arrow back /></PageButton>
        <PageNumber>1</PageNumber>
        <PageTotal>/  1000</PageTotal>
        <PageButton $w={16} $after={10}><Arrow /></PageButton>
        <PageButton $w={22}><Arrow double /></PageButton>
      </Pager>
      <Panels>
        <BreedChart />
        <AnimalMap />
      </Panels>
    </Page>
  );
}
